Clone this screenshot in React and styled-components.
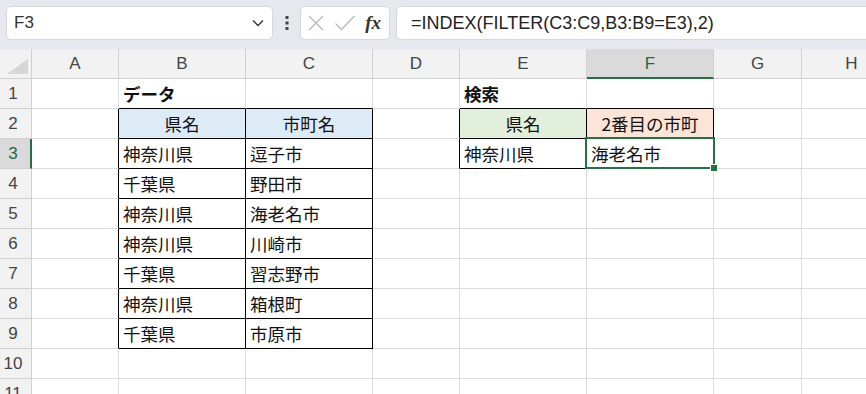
import React from "react";
import styled, { createGlobalStyle } from "styled-components";

const GlobalStyle = createGlobalStyle`
  html, body { margin: 0; padding: 0; background: #ffffff; }
  body { font-family: "Noto Sans CJK JP", "Liberation Sans", sans-serif; }
`;

const GRID = "#dcdcdc";
const HEAD_LINE = "#d0d0d0";
const GREEN = "#217346";
const CJK = `"Noto Sans CJK JP", "Liberation Sans", sans-serif`;
const LATIN = `"Liberation Sans", "Noto Sans CJK JP", sans-serif`;

const Page = styled.div`
  width: 866px;
  height: 394px;
  overflow: hidden;
  background: #fff;
`;

const Toolbar = styled.div`
  display: flex;
  align-items: flex-start;
  height: 49px;
  box-sizing: border-box;
  padding: 6px 0 0 6px;
  background: #e6e8ee;
  overflow: hidden;
`;

const Box = styled.div`
  height: 34px;
  box-sizing: border-box;
  background: #fff;
  border: 1px solid #d6d8de;
  border-radius: 5px;
  display: flex;
  align-items: center;
  flex: none;
`;

const NameBox = styled(Box)`
  width: 267px;
  padding: 0 8px 0 7px;
  justify-content: space-between;
`;

const NameText = styled.span`
  font-family: ${LATIN};
  font-size: 17px;
  color: #333;
`;

const Kebab = styled.div`
  width: 27px;
  height: 34px;
  flex: none;
  display: flex;
  align-items: center;
  justify-content: center;
`;

const FxGroup = styled(Box)`
  width: 90px;
  padding: 0 6px 0 6px;
  justify-content: space-between;
`;

const FxLabel = styled.span`
  font-family: "Liberation Serif", serif;
  font-style: italic;
  font-weight: bold;
  font-size: 19px;
  color: #333;
  margin-right: 2px;
`;

const FormulaBox = styled(Box)`
  flex: 1;
  margin-left: 6px;
  margin-right: -20px;
  padding-left: 14px;
`;

const FormulaText = styled.span`
  font-family: ${LATIN};
  font-size: 18px;
  color: #222;
  white-space: nowrap;
`;

const Sheet = styled.div`
  display: flex;
  flex-direction: column;
`;

const Row = styled.div`
  display: flex;
  height: ${(p) => p.$h}px;
  flex: none;
`;

const Corner = styled.div`
  width: 32px;
  flex: none;
  height: 100%;
  box-sizing: border-box;
  background: #f2f2f2;
  border-right: 1px solid ${HEAD_LINE};
  border-bottom: 1px solid ${HEAD_LINE};
  display: flex;
  align-items: flex-end;
  justify-content: flex-end;
  padding: 0 3px 4px 0;
`;

const ColHeader = styled.div`
  width: ${(p) => p.$w}px;
  flex: none;
  height: 100%;
  box-sizing: border-box;
  background: ${(p) => (p.$active ? "#dadada" : "#f2f2f2")};
  border-right: 1px solid ${HEAD_LINE};
  border-bottom: ${(p) => (p.$active ? `2px solid ${GREEN}` : `1px solid ${HEAD_LINE}`)};
  display: flex;
  align-items: center;
  justify-content: center;
  padding-top: ${(p) => (p.$active ? 1 : 0)}px;
  font-family: ${LATIN};
  font-size: 17px;
  color: ${(p) => (p.$active ? "#1d6a41" : "#444")};
`;

const RowHeader = styled.div`
  width: 32px;
  flex: none;
  height: 100%;
  box-sizing: border-box;
  background: ${(p) => (p.$active ? "#dadada" : "#f2f2f2")};
  border-right: ${(p) => (p.$active ? `2px solid ${GREEN}` : `1px solid ${HEAD_LINE}`)};
  border-bottom: 1px solid ${HEAD_LINE};
  display: flex;
  align-items: center;
  justify-content: center;
  padding-right: ${(p) => (p.$active ? 4 : 5)}px;
  font-family: ${LATIN};
  font-size: 17px;
  color: ${(p) => (p.$active ? "#1d6a41" : "#444")};
`;

const Cell = styled.div`
  position: relative;
  width: ${(p) => p.$w}px;
  flex: none;
  height: 100%;
  box-sizing: border-box;
  background: ${(p) => p.$fill || "#fff"};
  border-right: 1px solid ${(p) => (p.$rb ? "#000" : GRID)};
  border-bottom: 1px solid ${(p) => (p.$bb ? "#000" : GRID)};
  display: flex;
  align-items: center;
  justify-content: ${(p) => (p.$center ? "center" : "flex-start")};
  padding: 1px 4px 0 4px;
  font-family: ${CJK};
  font-size: 17.5px;
  font-weight: ${(p) => (p.$bold ? 700 : 400)};
  color: #111;
  white-space: nowrap;
  line-height: 1;
`;

const Selection = styled.div`
  position: absolute;
  z-index: 3;
  top: -2px;
  left: -2px;
  right: -2px;
  bottom: -1px;
  border: 2px solid ${GREEN};
  pointer-events: none;
`;

const Handle = styled.div`
  position: absolute;
  right: -5px;
  bottom: -5px;
  width: 6px;
  height: 6px;
  background: ${GREEN};
  border: 1px solid #fff;
`;

const COLS = [
  { key: "A", w: 87 },
  { key: "B", w: 127 },
  { key: "C", w: 127 },
  { key: "D", w: 87 },
  { key: "E", w: 127 },
  { key: "F", w: 127 },
  { key: "G", w: 88 },
  { key: "H", w: 100 },
];

const HEAD_FILL = "#ddebf7";
const CELLS = {
  B1: { v: "データ", bold: true },
  E1: { v: "検索", bold: true },
  B2: { v: "県名", fill: HEAD_FILL, center: true },
  C2: { v: "市町名", fill: HEAD_FILL, center: true },
  E2: { v: "県名", fill: "#e2efda", center: true },
  F2: { v: "2番目の市町", fill: "#fce4d6", center: true },
  B3: { v: "神奈川県" },
  C3: { v: "逗子市" },
  B4: { v: "千葉県" },
  C4: { v: "野田市" },
  B5: { v: "神奈川県" },
  C5: { v: "海老名市" },
  B6: { v: "神奈川県" },
  C6: { v: "川崎市" },
  B7: { v: "千葉県" },
  C7: { v: "習志野市" },
  B8: { v: "神奈川県" },
  C8: { v: "箱根町" },
  B9: { v: "千葉県" },
  C9: { v: "市原市" },
  E3: { v: "神奈川県" },
  F3: { v: "海老名市" },
};

const TABLES = [
  { c1: 2, c2: 3, r1: 2, r2: 9 },
  { c1: 5, c2: 6, r1: 2, r2: 3 },
];

const inTable = (c, r) =>
  TABLES.some((t) => c >= t.c1 && c <= t.c2 && r >= t.r1 && r <= t.r2);

const ROWS = [1, 2, 3, 4, 5, 6, 7, 8, 9, 10, 11];
const ACTIVE = { col: "F", row: 3 };

const Chevron = () => (
  <svg width="12" height="8" viewBox="0 0 12 8">
    <path d="M1 1.5 L6 6.5 L11 1.5" fill="none" stroke="#333" strokeWidth="1.3" />
  </svg>
);

const Dots = () => (
  <svg width="4" height="14" viewBox="0 0 4 14">
    <rect x="0.5" y="0" width="3" height="3" fill="#444" />
    <rect x="0.5" y="5.5" width="3" height="3" fill="#444" />
    <rect x="0.5" y="11" width="3" height="3" fill="#444" />
  </svg>
);

const CrossIcon = () => (
  <svg width="18" height="18" viewBox="0 0 18 18">
    <path d="M2 2 L16 16 M16 2 L2 16" stroke="#b8b8b8" strokeWidth="1.4" fill="none" />
  </svg>
);

const CheckIcon = () => (
  <svg width="22" height="18" viewBox="0 0 22 18">
    <path d="M1.5 9.5 L7.5 15.5 L20.5 2" stroke="#b8b8b8" strokeWidth="1.4" fill="none" />
  </svg>
);

const CornerTriangle = () => (
  <svg width="21" height="15" viewBox="0 0 21 15">
    <polygon points="21,0 21,15 0,15" fill="#d6d6d6" />
  </svg>
);

export default function App() {
  return (
    <Page>
      <GlobalStyle />
      <Toolbar>
        <NameBox>
          <NameText>F3</NameText>
          <Chevron />
        </NameBox>
        <Kebab>
          <Dots />
        </Kebab>
        <FxGroup>
          <CrossIcon />
          <CheckIcon />
          <FxLabel>fx</FxLabel>
        </FxGroup>
        <FormulaBox>
          <FormulaText>=INDEX(FILTER(C3:C9,B3:B9=E3),2)</FormulaText>
        </FormulaBox>
      </Toolbar>
      <Sheet>
        <Row $h={30}>
          <Corner>
            <CornerTriangle />
          </Corner>
          {COLS.map((c) => (
            <ColHeader key={c.key} $w={c.w} $active={c.key === ACTIVE.col}>
              {c.key}
            </ColHeader>
          ))}
        </Row>
        {ROWS.map((r) => (
          <Row key={r} $h={30}>
            <RowHeader $active={r === ACTIVE.row}>{r}</RowHeader>
            {COLS.map((c, i) => {
              const ci = i + 1;
              const id = `${c.key}${r}`;
              const d = CELLS[id] || {};
              const selected = c.key === ACTIVE.col && r === ACTIVE.row;
              return (
                <Cell
                  key={id}
                  $w={c.w}
                  $rb={inTable(ci, r) || inTable(ci + 1, r)}
                  $bb={inTable(ci, r) || inTable(ci, r + 1)}
                  $fill={d.fill}
                  $bold={d.bold}
                  $center={d.center}
                >
                  {d.v}
                  {selected && (
                    <Selection>
                      <Handle />
                    </Selection>
                  )}
                </Cell>
              );
            })}
          </Row>
        ))}
      </Sheet>
    </Page>
  );
}
